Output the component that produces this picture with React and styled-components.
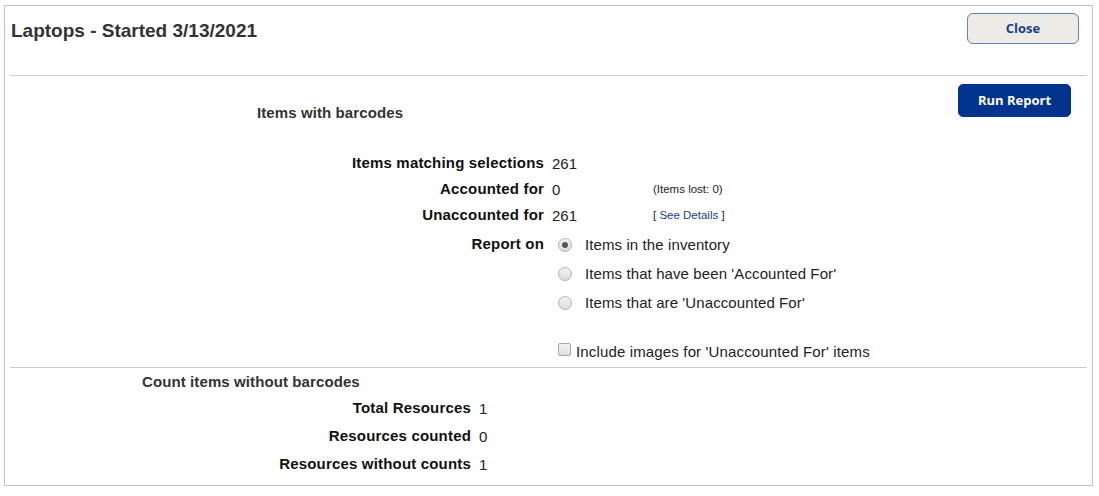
import React from "react";
import styled, { createGlobalStyle } from "styled-components";

const Global = createGlobalStyle`
  html, body { margin: 0; padding: 0; background: #fff; }
  body { font-family: "Liberation Sans", Arial, sans-serif; color: #111; }
  * { box-sizing: border-box; }
`;

const Panel = styled.div`
  margin: 5px 0 0 4px;
  width: 1089px;
  height: 481px;
  border: 1px solid #c4c4c4;
  background: #fff;
`;

const Header = styled.div`
  height: 69px;
  display: flex;
  justify-content: space-between;
  align-items: flex-start;
  padding: 7px 13px 0 6px;
`;

const Title = styled.h1`
  margin: 7px 0 0 0;
  font-size: 19px;
  line-height: 22px;
  font-weight: 700;
  color: #333;
`;

const Button = styled.button`
  font-family: "Open Sans", "Liberation Sans", sans-serif;
  font-weight: 700;
  font-size: 13px;
  line-height: 16px;
  cursor: pointer;
  padding: 0 0 2px 0;
  width: ${(p) => p.$w}px;
  height: ${(p) => p.$h}px;
  border-radius: ${(p) => (p.$primary ? 5 : 6)}px;
  background: ${(p) => (p.$primary ? "#00338d" : "#ecebe6")};
  color: ${(p) => (p.$primary ? "#fff" : "#203c85")};
  border: ${(p) => (p.$primary ? "1px solid #00338d" : "1.5px solid #6483bd")};
`;

const Divider = styled.hr`
  margin: 0 5px 0 5px;
  border: 0;
  height: 1px;
  background: #cdcdcd;
`;

const Section = styled.section`
  padding: ${(p) => p.$pad};
  height: ${(p) => p.$h}px;
`;

const SectionTop = styled.div`
  display: flex;
  justify-content: space-between;
  align-items: flex-start;
  padding-right: 21px;
`;

const SectionTitle = styled.h2`
  margin: ${(p) => p.$m};
  font-size: 15px;
  line-height: 16px;
  font-weight: 700;
  color: #333;
  letter-spacing: 0.1px;
`;

const Rows = styled.div`
  margin-top: ${(p) => p.$mt}px;
`;

const Row = styled.div`
  display: flex;
  align-items: ${(p) => (p.$top ? "flex-start" : "center")};
  min-height: ${(p) => p.$h}px;
  margin-top: ${(p) => p.$mt || 0}px;
`;

const Label = styled.div`
  width: ${(p) => p.$w}px;
  text-align: right;
  font-size: 15px;
  font-weight: 700;
  color: #111;
  letter-spacing: 0.18px;
  line-height: ${(p) => p.$lh || 16}px;
`;

const Value = styled.div`
  margin-left: 8px;
  width: ${(p) => p.$w || "auto"};
  font-size: 15px;
  color: #222;
`;

const Note = styled.div`
  font-size: 11.5px;
  color: #222;
`;

const Link = styled.a`
  color: #1a3b8c;
  text-decoration: none;
`;

const Options = styled.div`
  margin-left: 14px;
  display: flex;
  flex-direction: column;
`;

const Option = styled.label`
  display: flex;
  align-items: center;
  height: 29px;
  font-size: 15px;
  color: #222;
  letter-spacing: 0.1px;
  gap: 13px;
`;

const Radio = styled.span`
  position: relative;
  width: 14px;
  height: 14px;
  border-radius: 50%;
  border: 1px solid #b5b5b5;
  background: linear-gradient(#f2f2f2, #dcdcdc);
  flex: none;
  &::after {
    content: "";
    display: ${(p) => (p.$on ? "block" : "none")};
    position: absolute;
    left: 3px;
    top: 3px;
    width: 6px;
    height: 6px;
    border-radius: 50%;
    background: #555;
  }
`;

const CheckRow = styled.label`
  display: flex;
  align-items: center;
  margin: 24px 0 0 553px;
  height: 20px;
  font-size: 15px;
  color: #222;
  letter-spacing: 0.15px;
  gap: 5px;
`;

const Box = styled.span`
  width: 13px;
  height: 13px;
  border: 1px solid #a9a9a9;
  border-radius: 2px;
  background: linear-gradient(#f4f4f4, #dedede);
  margin-top: -3px;
  flex: none;
`;

export default function App() {
  return (
    <>
      <Global />
      <Panel>
        <Header>
          <Title>Laptops - Started 3/13/2021</Title>
          <Button $w={112} $h={31}>Close</Button>
        </Header>
        <Divider />
        <Section $pad="8px 0 0 0" $h={291}>
          <SectionTop>
            <SectionTitle $m="21px 0 0 252px">Items with barcodes</SectionTitle>
            <Button $primary $w={113} $h={33}>Run Report</Button>
          </SectionTop>
          <Rows $mt={29}>
            <Row $h={26}>
              <Label $w={539}>Items matching selections</Label>
              <Value>261</Value>
            </Row>
            <Row $h={26}>
              <Label $w={539}>Accounted for</Label>
              <Value $w="101px">0</Value>
              <Note>(Items lost: 0)</Note>
            </Row>
            <Row $h={26}>
              <Label $w={539}>Unaccounted for</Label>
              <Value $w="101px">261</Value>
              <Note>
                [ <Link href="#">See Details</Link> ]
              </Note>
            </Row>
            <Row $top $mt={2}>
              <Label $w={539} $lh={27}>Report on</Label>
              <Options>
                <Option>
                  <Radio $on />
                  Items in the inventory
                </Option>
                <Option>
                  <Radio />
                  Items that have been 'Accounted For'
                </Option>
                <Option>
                  <Radio />
                  Items that are 'Unaccounted For'
                </Option>
              </Options>
            </Row>
          </Rows>
          <CheckRow>
            <Box />
            Include images for 'Unaccounted For' items
          </CheckRow>
        </Section>
        <Divider />
        <Section $pad="6px 0 0 0">
          <SectionTitle $m="0 0 0 137px">Count items without barcodes</SectionTitle>
          <Rows $mt={4}>
            <Row $h={28}>
              <Label $w={466}>Total Resources</Label>
              <Value>1</Value>
            </Row>
            <Row $h={28}>
              <Label $w={466}>Resources counted</Label>
              <Value>0</Value>
            </Row>
            <Row $h={28}>
              <Label $w={466}>Resources without counts</Label>
              <Value>1</Value>
            </Row>
          </Rows>
        </Section>
      </Panel>
    </>
  );
}
